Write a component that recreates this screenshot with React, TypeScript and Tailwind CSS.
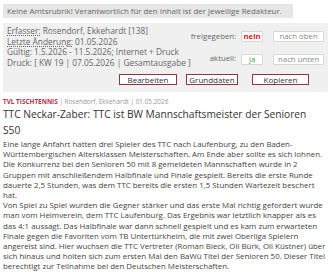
import React from "react";

const lines1 = [
  "Eine lange Anfahrt hatten drei Spieler des TTC nach Laufenburg, zu den Baden-",
  "Württembergischen Altersklassen Meisterschaften. Am Ende aber sollte es sich lohnen.",
  "Die Konkurrenz bei den Senioren 50 mit 8 gemeldeten Mannschaften wurde in 2",
  "Gruppen mit anschließendem Halbfinale und Finale gespielt. Bereits die erste Runde",
  "dauerte 2,5 Stunden, was dem TTC bereits die ersten 1,5 Stunden Wartezeit beschert",
  "hat.",
  "Von Spiel zu Spiel wurden die Gegner stärker und das erste Mal richtig gefordert wurde",
  "man vom Heimverein, dem TTC Laufenburg. Das Ergebnis war letztlich knapper als es",
  "das 4:1 aussagt. Das Halbfinale war dann schnell gespielt und es kam zum erwarteten",
  "Finale gegen die Favoriten vom TB Untertürkheim, die mit zwei Oberliga Spielern",
  "angereist sind. Hier wuchsen die TTC Vertreter (Roman Bleck, Oli Bürk, Oli Küstner) über",
  "sich hinaus und holten sich zum ersten Mal den BaWü Titel der Senioren 50. Dieser Titel",
  "berechtigt zur Teilnahme bei den Deutschen Meisterschaften.",
];

const App: React.FC = () => {
  return (
    <div className="w-[333px] h-[272px] overflow-hidden bg-white text-[#555] font-['Open_Sans',sans-serif]">
      {/* Hinweis */}
      <div className="mx-[3px] mt-[4px] w-[290px] h-[14px] bg-[#e6e6e6] pl-[4px] text-[7.9px] leading-[14px] text-[#666] whitespace-nowrap">
        Keine Amtsrubrik! Verantwortlich für den Inhalt ist der jeweilige Redakteur.
      </div>

      {/* Verwaltungs-Box */}
      <div className="mx-[3px] mt-[5px] w-[325px] bg-[#f0f0f0] pl-[4px] pr-[19px] pt-[3px] pb-[7px]">
        <div className="flex justify-between">
          <div className="text-[8.3px] leading-[10.5px] text-[#666] whitespace-nowrap">
            <div>
              <span className="underline decoration-dotted">Erfasser:</span> Rosendorf, Ekkehardt [138]
            </div>
            <div>
              <span className="underline decoration-dotted">Letzte Änderung:</span> 01.05.2026
            </div>
            <div>Gültig: 1.5.2026 - 11.5.2026; Internet + Druck</div>
            <div>Druck: [ KW 19 | 07.05.2026 | Gesamtausgabe ]</div>
          </div>
          <div className="grid grid-cols-[auto_22px_51px] gap-x-[5px] gap-y-[5px] items-center text-[7.8px] mt-[2px]">
            <span className="text-right text-[#666]">freigegeben:</span>
            <span className="h-[11px] leading-[9px] border border-[#d8d8d8] bg-white text-center font-bold text-[#e8202a]">
              nein
            </span>
            <span className="ml-[5px] w-[51px] h-[11px] leading-[9px] border border-[#d8d8d8] bg-white text-center text-[#888]">
              nach oben
            </span>
            <span className="text-right text-[#666]">aktuell:</span>
            <span className="h-[11px] leading-[9px] border border-[#d8d8d8] bg-white text-center text-[#3aa63a]">
              ja
            </span>
            <span className="ml-[5px] w-[51px] h-[11px] leading-[9px] border border-[#d8d8d8] bg-white text-center text-[#888]">
              nach unten
            </span>
          </div>
        </div>
        <div className="flex justify-end mt-[6px] text-[8px] text-[#333]">
          <button className="w-[58px] h-[11px] leading-[9px] border border-[#8e3446] bg-white">Bearbeiten</button>
          <button className="ml-[9px] w-[52px] h-[11px] leading-[9px] border border-[#8e3446] bg-white">Grunddaten</button>
          <button className="ml-[14px] w-[57px] h-[11px] leading-[9px] border border-[#8e3446] bg-white">Kopieren</button>
        </div>
      </div>

      {/* Artikel */}
      <div className="px-[3px] mt-[5px]">
        <div className="text-[6.4px] leading-[9px] text-[#999] whitespace-nowrap">
          <span className="font-bold text-[#b8334a]">TVL TISCHTENNIS</span> | Rosendorf, Ekkehardt | 01.05.2026
        </div>
        <h1 className="pr-[14px] text-[10.2px] leading-[16px] text-[#333] font-normal">
          TTC Neckar-Zaber: TTC ist BW Mannschaftsmeister der Senioren S50
        </h1>
        <p className="mt-[1px] text-[7.9px] leading-[10.2px] text-[#444] whitespace-nowrap">
          {lines1.map((l, i) => (
            <React.Fragment key={i}>
              {l}
              <br />
            </React.Fragment>
          ))}
        </p>
      </div>
    </div>
  );
};

export default App;
